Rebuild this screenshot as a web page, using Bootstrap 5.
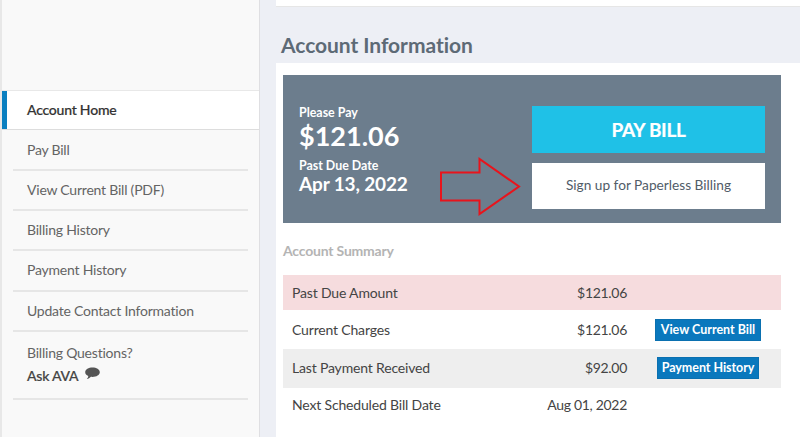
<!DOCTYPE html>
<html lang="en">
<head>
<meta charset="utf-8">
<title>Account Information</title>
<link href="https://cdn.jsdelivr.net/npm/bootstrap@5.3.0/dist/css/bootstrap.min.css" rel="stylesheet">
<style>
html,body{height:437px;overflow:hidden}
body{font-family:"Lato","Liberation Sans",sans-serif;background:#edeff5;color:#4a4a4a}
.page-wrap{height:437px}
.side-rail{width:260px;flex:none;background:#f9f9f9;border-left:2px solid #e8e8e8;border-right:1px solid #dfdfe2;padding-top:90px}
.side-link{display:block;height:40.3px;margin:0 11px;padding-top:9px;padding-left:14px;font-size:14px;line-height:20px;letter-spacing:-.22px;color:#646464;text-decoration:none;border-bottom:2px solid #e6e6e6}
.side-link.is-current{height:40px;margin:0 0 .6px;padding-left:25px;padding-top:9px;background:#fff;color:#333;font-weight:500;border-bottom:1px solid #ddd;border-top:1px solid #e8e8e8;position:relative;-webkit-text-stroke:.2px #333}
.side-link.is-current::before{content:"";position:absolute;left:0;top:0;bottom:0;width:5px;background:#0a7fc0}
.side-ask{height:68px;margin:0 11px;padding:9px 0 0 14px;font-size:14px;line-height:23px;letter-spacing:-.22px;color:#646464;border-bottom:2px solid #e6e6e6}
.side-ask b{font-weight:500;color:#444;-webkit-text-stroke:.2px #444}
.ask-icon{margin-left:3px;vertical-align:1px}
.main-col{padding-left:16px;min-width:0}
.top-strip{height:7px;background:#fff;border-bottom:1px solid #e6e6e6}
.page-title{font-size:21px;font-weight:700;color:#5d6a76;line-height:26px;margin:25px 0 5px 5px;letter-spacing:-.05px}
.sheet{background:#fff;height:374px;padding:12px 19px 0 7px}
.pay-panel{background:#6c7d8d;height:148px;color:#fff;padding:31px 16px 0 16px;position:relative}
.pay-label{font-size:12.4px;line-height:14px;font-weight:700}
.pay-amount{font-size:27px;line-height:31px;font-weight:700;margin-bottom:8px}
.pay-date{font-size:19px;line-height:21px;font-weight:700;letter-spacing:-.15px}
.pay-actions{width:233px}
.btn-pay{background:#1fc1e7;color:#fff;height:47px;border-radius:0;font-weight:700;font-size:19px;line-height:47px;padding:0;border:0;letter-spacing:-.3px;-webkit-text-stroke:.2px #fff}
.btn-paperless{background:#fff;color:#515c68;height:46px;border-radius:0;font-size:13.7px;line-height:44px;padding:0;border:0;margin-top:9.500px}
.btn-pay:hover,.btn-paperless:hover{color:inherit}
.hint-arrow{position:absolute;left:156px;top:82px}
.sum-title{font-size:14px;font-weight:700;color:#b4b4b4;line-height:18px;margin:19px 0 15px;letter-spacing:-.2px}
.sum-table{--bs-table-bg:transparent;margin:0;font-size:14px;table-layout:fixed;letter-spacing:-.17px}
.sum-table td{padding:0 0 0 9px;border:0;vertical-align:middle;color:#444}
.sum-table .amt{text-align:right;padding:0 1px 0 0;width:135px;letter-spacing:-.3px}
.sum-table .act{text-align:center;width:153px;padding:0}
.sum-table .lbl{width:210px}
.sum-table .row-due td{background:#f6dcde;height:35px}
.sum-table .row-plain td{height:39px}
.sum-table .row-alt td{background:#eee;height:39px;padding-bottom:2px}
.sum-table .row-next td{height:34px;padding-bottom:2px}
.mini-btn{background:#0a78bd;color:#fff;font-size:12.5px;font-weight:700;line-height:20px;height:22px;padding:0 5px;border-radius:0;border:1px solid #0a70b0;white-space:nowrap;display:inline-block;text-decoration:none;margin-left:7px;letter-spacing:0}
.mini-btn.is-tight{padding:0 4px;letter-spacing:-.05px}
.mini-btn:hover{color:#fff}
</style>
</head>
<body>
<div class="d-flex page-wrap">
  <nav class="side-rail">
    <a class="side-link is-current" href="#">Account Home</a>
    <a class="side-link" href="#">Pay Bill</a>
    <a class="side-link" href="#">View Current Bill (PDF)</a>
    <a class="side-link" href="#">Billing History</a>
    <a class="side-link" href="#">Payment History</a>
    <a class="side-link" href="#">Update Contact Information</a>
    <div class="side-ask">Billing Questions?<br><b>Ask AVA</b>
      <svg class="ask-icon" width="15" height="13" viewBox="0 0 15 13" aria-hidden="true"><path fill="#555" d="M7.500 .5C11.400 .5 14.800 2.600 14.800 5.200S11.400 9.900 7.500 9.900c-.6 0-1.100 0-1.600-.1C4.800 11 3.400 11.800 1.800 12c.8-.8 1.400-1.800 1.500-3C1.400 8.100.2 6.800.2 5.200.2 2.600 3.600 .5 7.500 .5Z"/></svg>
    </div>
  </nav>
  <main class="main-col flex-grow-1">
    <div class="top-strip"></div>
    <h1 class="page-title">Account Information</h1>
    <div class="sheet">
      <section class="pay-panel d-flex justify-content-between">
        <div>
          <div class="pay-label">Please Pay</div>
          <div class="pay-amount">$121.06</div>
          <div class="pay-label">Past Due Date</div>
          <div class="pay-date">Apr 13, 2022</div>
        </div>
        <svg class="hint-arrow" width="84" height="60" viewBox="0 0 84 60" aria-hidden="true"><path fill="none" stroke="#e8141c" stroke-width="2" d="M2 15.500H40.500V2L80 29.500 40.500 57V43.500H2Z"/></svg>
        <div class="pay-actions">
          <a class="btn btn-pay d-block" href="#">PAY BILL</a>
          <a class="btn btn-paperless d-block" href="#">Sign up for Paperless Billing</a>
        </div>
      </section>
      <div class="sum-title">Account Summary</div>
      <table class="table sum-table">
        <tbody>
          <tr class="row-due"><td class="lbl">Past Due Amount</td><td class="amt">$121.06</td><td class="act"></td></tr>
          <tr class="row-plain"><td class="lbl">Current Charges</td><td class="amt">$121.06</td><td class="act"><a class="mini-btn" href="#">View Current Bill</a></td></tr>
          <tr class="row-alt"><td class="lbl">Last Payment Received</td><td class="amt">$92.00</td><td class="act"><a class="mini-btn is-tight" href="#">Payment History</a></td></tr>
          <tr class="row-next"><td class="lbl">Next Scheduled Bill Date</td><td class="amt">Aug 01, 2022</td><td class="act"></td></tr>
        </tbody>
      </table>
    </div>
  </main>
</div>
<script src="https://cdn.jsdelivr.net/npm/bootstrap@5.3.0/dist/js/bootstrap.bundle.min.js"></script>
</body>
</html>
